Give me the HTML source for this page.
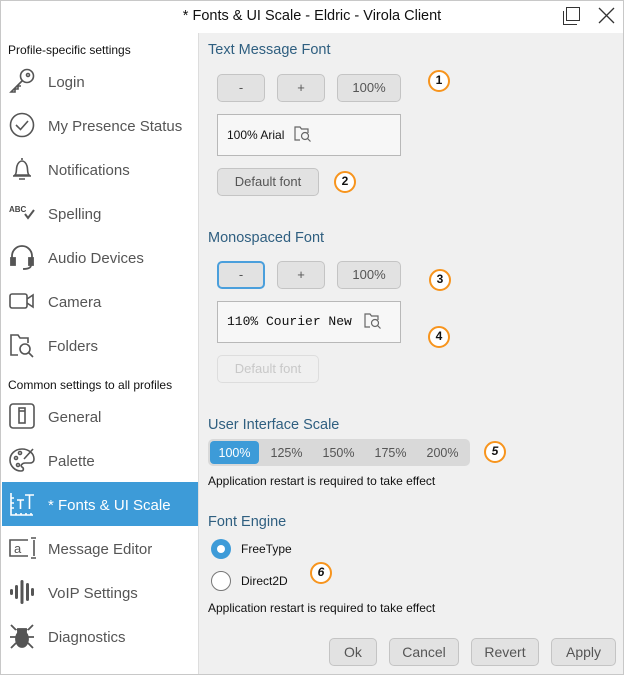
<!DOCTYPE html>
<html><head><meta charset="utf-8"><style>
*{box-sizing:border-box;margin:0;padding:0}
body{width:624px;height:675px;background:#fff;font-family:"Liberation Sans",sans-serif;position:relative;overflow:hidden;color:#000}
.a{position:absolute}
.frame{left:0;top:0;width:624px;height:675px;border:1px solid #c8c8c8}
.title{left:0;top:0;width:624px;height:33px;text-align:center;line-height:33px;font-size:14.5px;color:#111}
.side{left:1px;top:33px;width:198px;height:641px;background:#fff;border-right:1px solid #ddd}
.main{left:199px;top:33px;width:424px;height:641px;background:#f0f0f0}
.hdr{font-size:12px;color:#111}
.it{left:48px;font-size:15px;color:#555;margin-top:1px}
.ic{left:8px;width:28px;height:28px}
.h{left:208px;font-size:14.5px;color:#2f5f80;margin-top:1px}
.btn{background:#e2e2e2;border:1px solid #c4c4c4;border-radius:5px;text-align:center;font-size:13px;color:#555}
.num{width:22px;height:22px;border:2.5px solid #f7941d;border-radius:50%;background:#fff;text-align:center;font-size:12px;font-weight:bold;line-height:17px;color:#111}
.box{background:#f7f7f7;border:1px solid #b8b8b8}
.sm{font-size:12px;color:#111}
</style></head><body>
<div class="a frame"></div>
<div class="a title">* Fonts &amp; UI Scale - Eldric - Virola Client</div>
<svg class="a" style="left:561px;top:6px" width="20" height="20"><rect x="5.5" y="1.5" width="13" height="13" fill="none" stroke="#333"/><path d="M2.5 5v13.5H16" fill="none" stroke="#333"/></svg>
<svg class="a" style="left:598px;top:7px" width="18" height="18"><path d="M1 1L16 16M16 1L1 16" stroke="#333" stroke-width="1.3"/></svg>
<div class="a side"></div>
<div class="a main"></div>

<div class="a hdr" style="left:8px;top:43px">Profile-specific settings</div>
<div class="a hdr" style="left:8px;top:378px">Common settings to all profiles</div>
<div class="a" style="left:2px;top:482px;width:196px;height:44px;background:#3d9bd8"></div>

<svg class="a ic" style="top:67px" viewBox="0 0 28 28" fill="none" stroke="#555" stroke-width="1.6"><circle cx="19" cy="9" r="6.5"/><circle cx="20" cy="8" r="1.5"/><path d="M14.5 13.5L3 25h4v-3h3v-3h3"/></svg>
<div class="a it" style="top:73px">Login</div>
<svg class="a ic" style="top:111px" viewBox="0 0 28 28" fill="none" stroke="#555" stroke-width="1.6"><circle cx="14" cy="14" r="11.5"/><path d="M8 14l4.5 4.5L20 10"/></svg>
<div class="a it" style="top:117px">My Presence Status</div>
<svg class="a ic" style="top:155px" viewBox="0 0 28 28" fill="none" stroke="#555" stroke-width="1.6"><path d="M14 3v2M7 20c2-2 1-6 2-9s3-5 5-5 4 2 5 5 0 7 2 9zM5 21h18M11 24h6"/></svg>
<div class="a it" style="top:161px">Notifications</div>
<svg class="a ic" style="top:199px" viewBox="0 0 28 28"><text x="1" y="13" font-size="8" font-family="Liberation Sans" fill="#444" font-weight="bold">ABC</text><path d="M17 15l3 4 6-8" fill="none" stroke="#555" stroke-width="2"/></svg>
<div class="a it" style="top:205px">Spelling</div>
<svg class="a ic" style="top:243px" viewBox="0 0 28 28" fill="none" stroke="#555" stroke-width="1.8"><path d="M4 16v-3a10 10 0 0 1 20 0v3"/><rect x="3" y="15" width="4" height="7" fill="#555"/><rect x="21" y="15" width="4" height="7" fill="#555"/><path d="M23 22c0 3-3 4-8 4"/></svg>
<div class="a it" style="top:249px">Audio Devices</div>
<svg class="a ic" style="top:287px" viewBox="0 0 28 28" fill="none" stroke="#555" stroke-width="1.6"><rect x="2" y="7" width="17" height="14" rx="2"/><path d="M19 12l6-4v12l-6-4"/></svg>
<div class="a it" style="top:293px">Camera</div>
<svg class="a ic" style="top:331px" viewBox="0 0 28 28" fill="none" stroke="#555" stroke-width="1.6"><path d="M10 24H3V4h7l2 3h8v5"/><circle cx="17" cy="18" r="5"/><path d="M21 22l4 4"/></svg>
<div class="a it" style="top:337px">Folders</div>

<svg class="a ic" style="top:402px" viewBox="0 0 28 28" fill="none" stroke="#555" stroke-width="1.6"><rect x="2" y="2" width="24" height="24" rx="3"/><rect x="11" y="6" width="6" height="15"/><path d="M11 9h6" /></svg>
<div class="a it" style="top:408px">General</div>
<svg class="a ic" style="top:446px" viewBox="0 0 28 28" fill="none" stroke="#555" stroke-width="1.6"><path d="M14 3C7 3 2 8 2 14s5 11 11 11c3 0 3-3 1-4s0-4 3-4h5c3 0 4-2 4-4C26 7 20 3 14 3z"/><circle cx="8" cy="12" r="1.5"/><circle cx="10" cy="19" r="1.5"/><circle cx="12" cy="7" r="1.5"/><path d="M25 3l-9 10"/></svg>
<div class="a it" style="top:452px">Palette</div>
<svg class="a ic" style="top:490px" viewBox="0 0 28 28" fill="none" stroke="#fff" stroke-width="1.6"><path d="M3 3v22h22M3 8h3M3 13h3M3 18h3M8 25v-2M13 25v-2M18 25v-2M23 25v-2M9 10h7M12.5 10v9M17 5h9M21.5 5v14"/></svg>
<div class="a it" style="top:496px;color:#fff">* Fonts &amp; UI Scale</div>
<svg class="a ic" style="top:534px" viewBox="0 0 28 28" fill="none" stroke="#555" stroke-width="1.6"><path d="M20 6H2v16h18M26 6v16M23 4h6M23 24h6"/><text x="6" y="19" font-size="13" font-family="Liberation Sans" fill="#555" stroke="none">a</text></svg>
<div class="a it" style="top:540px">Message Editor</div>
<svg class="a ic" style="top:578px" viewBox="0 0 28 28" fill="#555"><rect x="2" y="11" width="3" height="6" rx="1.5"/><rect x="7" y="7" width="3" height="14" rx="1.5"/><rect x="12.5" y="2" width="3" height="24" rx="1.5"/><rect x="18" y="5" width="3" height="18" rx="1.5"/><rect x="23" y="10" width="3" height="8" rx="1.5"/></svg>
<div class="a it" style="top:584px">VoIP Settings</div>
<svg class="a ic" style="top:622px" viewBox="0 0 28 28" fill="#555" stroke="#555" stroke-width="1.8"><ellipse cx="14" cy="17" rx="6" ry="8"/><path d="M9 7l2 3h6l2-3M3 3l5 5M25 3l-5 5M2 15h6M20 15h6M3 26l5-5M25 26l-5-5" fill="none"/><rect x="10" y="7" width="8" height="4"/></svg>
<div class="a it" style="top:628px">Diagnostics</div>

<div class="a h" style="top:41px">Text Message Font</div>
<div class="a btn" style="left:217px;top:74px;width:48px;height:28px;line-height:26px">-</div>
<div class="a btn" style="left:277px;top:74px;width:48px;height:28px;line-height:26px">+</div>
<div class="a btn" style="left:337px;top:74px;width:64px;height:28px;line-height:26px">100%</div>
<div class="a num" style="left:428px;top:70px">1</div>
<div class="a box" style="left:217px;top:114px;width:184px;height:42px"></div>
<div class="a" style="left:227px;top:128px;font-size:12px;color:#111">100% Arial</div>
<svg class="a" style="left:294px;top:126px" width="18" height="17" fill="none" stroke="#666" stroke-width="1.2"><path d="M6 14H1V1h5l1.5 2H14v4"/><circle cx="11" cy="10" r="3.5"/><path d="M13.5 12.5l3 3"/></svg>
<div class="a btn" style="left:217px;top:168px;width:102px;height:28px;line-height:26px">Default font</div>
<div class="a num" style="left:334px;top:171px">2</div>

<div class="a h" style="top:229px">Monospaced Font</div>
<div class="a btn" style="left:217px;top:261px;width:48px;height:28px;line-height:24px;border:2px solid #4a9fdc">-</div>
<div class="a btn" style="left:277px;top:261px;width:48px;height:28px;line-height:26px">+</div>
<div class="a btn" style="left:337px;top:261px;width:64px;height:28px;line-height:26px">100%</div>
<div class="a num" style="left:429px;top:269px">3</div>
<div class="a box" style="left:217px;top:301px;width:184px;height:42px"></div>
<div class="a" style="left:227px;top:314px;font-size:13px;font-family:'Liberation Mono',monospace;color:#111">110% Courier New</div>
<svg class="a" style="left:364px;top:313px" width="18" height="17" fill="none" stroke="#666" stroke-width="1.2"><path d="M6 14H1V1h5l1.5 2H14v4"/><circle cx="11" cy="10" r="3.5"/><path d="M13.5 12.5l3 3"/></svg>
<div class="a num" style="left:428px;top:326px">4</div>
<div class="a btn" style="left:217px;top:355px;width:102px;height:28px;line-height:26px;background:#f0f0f0;border-color:#ddd;color:#c8c8c8">Default font</div>

<div class="a h" style="top:416px">User Interface Scale</div>
<div class="a" style="left:208px;top:439px;width:262px;height:27px;background:#d9d9d9;border-radius:5px"></div>
<div class="a" style="left:210px;top:441px;width:49px;height:23px;background:#3d9bd8;border-radius:4px"></div>
<div class="a sm" style="left:210px;top:446px;width:49px;text-align:center;color:#fff;font-size:12.5px">100%</div>
<div class="a sm" style="left:262px;top:446px;width:49px;text-align:center;color:#555;font-size:12.5px">125%</div>
<div class="a sm" style="left:314px;top:446px;width:49px;text-align:center;color:#555;font-size:12.5px">150%</div>
<div class="a sm" style="left:366px;top:446px;width:49px;text-align:center;color:#555;font-size:12.5px">175%</div>
<div class="a sm" style="left:418px;top:446px;width:49px;text-align:center;color:#555;font-size:12.5px">200%</div>
<div class="a num" style="left:484px;top:441px;font-style:italic">5</div>
<div class="a sm" style="left:208px;top:474px">Application restart is required to take effect</div>

<div class="a h" style="top:513px">Font Engine</div>
<div class="a" style="left:211px;top:539px;width:20px;height:20px;border-radius:50%;background:#3d9bd8"></div>
<div class="a" style="left:217px;top:545px;width:8px;height:8px;border-radius:50%;background:#fff"></div>
<div class="a sm" style="left:241px;top:542px">FreeType</div>
<div class="a" style="left:211px;top:571px;width:20px;height:20px;border-radius:50%;background:#fff;border:1px solid #777"></div>
<div class="a sm" style="left:241px;top:574px">Direct2D</div>
<div class="a num" style="left:310px;top:562px;font-style:italic">6</div>
<div class="a sm" style="left:208px;top:601px">Application restart is required to take effect</div>

<div class="a btn" style="left:329px;top:638px;width:48px;height:28px;line-height:26px;font-size:14px">Ok</div>
<div class="a btn" style="left:389px;top:638px;width:70px;height:28px;line-height:26px;font-size:14px">Cancel</div>
<div class="a btn" style="left:471px;top:638px;width:68px;height:28px;line-height:26px;font-size:14px">Revert</div>
<div class="a btn" style="left:551px;top:638px;width:65px;height:28px;line-height:26px;font-size:14px">Apply</div>
</body></html>
